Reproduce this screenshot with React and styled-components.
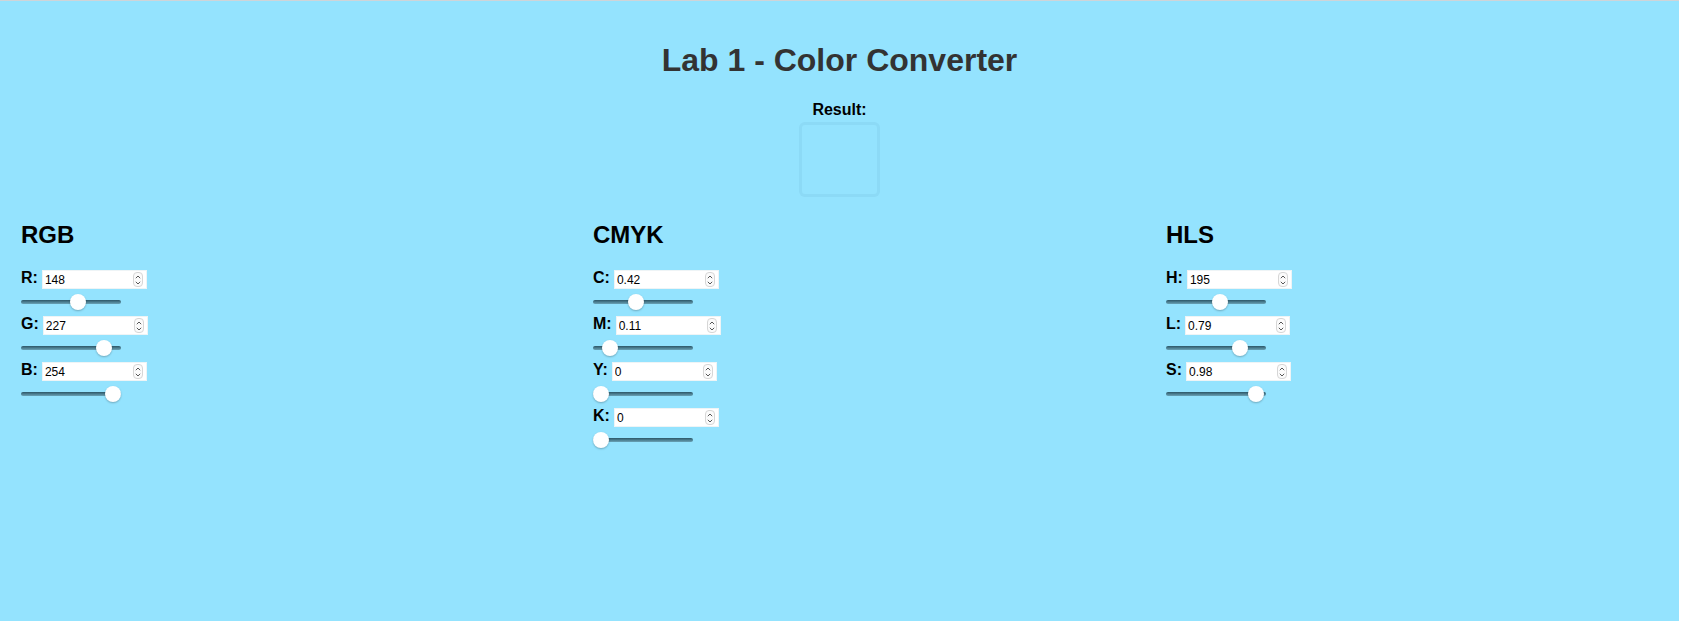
import { useState } from 'react'
import styled, { createGlobalStyle } from 'styled-components'

const GlobalStyle = createGlobalStyle`
  html, body {
    margin: 0;
    padding: 0;
    background: #ffffff;
  }

  body {
    font-family: "Liberation Sans", Arial, Helvetica, sans-serif;
  }
`

const Page = styled.main`
  width: calc(100% - 2px);
  min-height: 100vh;
  box-sizing: border-box;
  border-top: 1px solid #cfd4d8;
  background: ${({ $color }) => $color};
  overflow: hidden;
`

const Title = styled.h1`
  margin: 41px 0 0;
  font-size: 32px;
  line-height: 37px;
  font-weight: 700;
  color: #333333;
  text-align: center;
`

const Result = styled.section`
  display: flex;
  flex-direction: column;
  align-items: center;
  gap: 3px;
  margin-top: 22px;
`

const ResultLabel = styled.span`
  font-size: 16px;
  line-height: 18px;
  font-weight: 700;
  color: #000000;
`

const Swatch = styled.div`
  width: 81px;
  height: 75px;
  box-sizing: border-box;
  border: 3px solid rgba(0, 60, 90, 0.05);
  border-radius: 6px;
  background: ${({ $color }) => $color};
`

const Columns = styled.div`
  display: grid;
  grid-template-columns: 572px 573px auto;
  margin-top: 24px;
  padding-left: 21px;
`

const Model = styled.section`
  display: flex;
  flex-direction: column;
`

const ModelTitle = styled.h2`
  margin: 0 0 21px;
  font-size: 24px;
  line-height: 28px;
  font-weight: 700;
  color: #000000;
`

const Row = styled.div`
  display: flex;
  flex-direction: column;
  align-items: flex-start;
  margin-bottom: 6px;
`

const FieldLine = styled.label`
  display: flex;
  align-items: flex-start;
  gap: 4px;
  height: 19px;
`

const Letter = styled.span`
  font-size: 16px;
  line-height: 16px;
  font-weight: 700;
  color: #000000;
`

const Field = styled.div`
  display: flex;
  align-items: center;
  width: 105px;
  height: 19px;
  box-sizing: border-box;
  background: #ffffff;
  border: 1px solid #eef4f6;
`

const NumberInput = styled.input`
  flex: 1;
  min-width: 0;
  height: 100%;
  padding: 0 0 0 2px;
  border: none;
  outline: none;
  background: transparent;
  font-family: "Liberation Sans", Arial, Helvetica, sans-serif;
  font-size: 12px;
  color: #000000;
  -moz-appearance: textfield;

  &::-webkit-inner-spin-button,
  &::-webkit-outer-spin-button {
    -webkit-appearance: none;
    margin: 0;
  }
`

const Spinner = styled.span`
  display: flex;
  flex-direction: column;
  align-items: center;
  justify-content: center;
  gap: 2px;
  width: 10px;
  height: 15px;
  margin-right: 3px;
  box-sizing: border-box;
  border: 1px solid #d6d6d6;
  border-radius: 4px;
  background: #fbfbfb;
  cursor: default;
`

const SpinArrow = styled.span`
  display: flex;
  width: 6px;
  height: 4px;
  line-height: 0;

  svg {
    display: block;
  }
`

const Range = styled.input`
  -webkit-appearance: none;
  appearance: none;
  width: 100px;
  height: 16px;
  margin: 5px 0 0;
  padding: 0;
  background: transparent;

  &::-webkit-slider-runnable-track {
    height: 4px;
    border-radius: 2px;
    background: linear-gradient(#2c5667, #6aa3b7);
  }

  &::-webkit-slider-thumb {
    -webkit-appearance: none;
    width: 16px;
    height: 16px;
    margin-top: -6px;
    border-radius: 50%;
    background: #ffffff;
    box-shadow: 0 1px 2px rgba(0, 0, 0, 0.25);
  }
`

function Chevron({ up }) {
  return (
    <svg width="6" height="4" viewBox="0 0 6 4">
      <path
        d={up ? 'M0.8 3.2 L3 1 L5.2 3.2' : 'M0.8 0.8 L3 3 L5.2 0.8'}
        fill="none"
        stroke="#444"
        strokeWidth="0.9"
      />
    </svg>
  )
}

const round2 = (n) => Number(n.toFixed(2))

function rgbToCmyk([r, g, b]) {
  const rr = r / 255
  const gg = g / 255
  const bb = b / 255
  const k = 1 - Math.max(rr, gg, bb)
  if (k >= 1) return [0, 0, 0, 1]
  return [
    (1 - rr - k) / (1 - k),
    (1 - gg - k) / (1 - k),
    (1 - bb - k) / (1 - k),
    k,
  ]
}

function cmykToRgb([c, m, y, k]) {
  return [
    Math.round(255 * (1 - c) * (1 - k)),
    Math.round(255 * (1 - m) * (1 - k)),
    Math.round(255 * (1 - y) * (1 - k)),
  ]
}

function rgbToHls([r, g, b]) {
  const rr = r / 255
  const gg = g / 255
  const bb = b / 255
  const max = Math.max(rr, gg, bb)
  const min = Math.min(rr, gg, bb)
  const l = (max + min) / 2
  const d = max - min
  if (d === 0) return [0, l, 0]
  const s = l > 0.5 ? d / (2 - max - min) : d / (max + min)
  let h
  if (max === rr) h = (gg - bb) / d + (gg < bb ? 6 : 0)
  else if (max === gg) h = (bb - rr) / d + 2
  else h = (rr - gg) / d + 4
  return [h * 60, l, s]
}

function hlsToRgb([h, l, s]) {
  const c = (1 - Math.abs(2 * l - 1)) * s
  const x = c * (1 - Math.abs(((h / 60) % 2) - 1))
  const m = l - c / 2
  let t
  if (h < 60) t = [c, x, 0]
  else if (h < 120) t = [x, c, 0]
  else if (h < 180) t = [0, c, x]
  else if (h < 240) t = [0, x, c]
  else if (h < 300) t = [x, 0, c]
  else t = [c, 0, x]
  return t.map((v) => Math.round((v + m) * 255))
}

function Channel({ letter, value, max, step, onChange }) {
  const bump = (dir) => onChange(Math.min(max, Math.max(0, round2(value + dir * step))))

  return (
    <Row>
      <FieldLine>
        <Letter>{letter}:</Letter>
        <Field>
          <NumberInput
            type="number"
            min={0}
            max={max}
            step={step}
            value={value}
            onChange={(e) => onChange(Math.min(max, Math.max(0, Number(e.target.value))))}
          />
          <Spinner>
            <SpinArrow onClick={() => bump(1)}><Chevron up /></SpinArrow>
            <SpinArrow onClick={() => bump(-1)}><Chevron /></SpinArrow>
          </Spinner>
        </Field>
      </FieldLine>
      <Range
        type="range"
        min={0}
        max={max}
        step={step}
        value={value}
        onChange={(e) => onChange(Number(e.target.value))}
      />
    </Row>
  )
}

function ColorModel({ title, letters, values, max, step, onChange }) {
  return (
    <Model>
      <ModelTitle>{title}</ModelTitle>
      {letters.map((letter, i) => (
        <Channel
          key={letter}
          letter={letter}
          value={values[i]}
          max={max[i]}
          step={step[i]}
          onChange={(v) => onChange(values.map((old, j) => (j === i ? v : old)))}
        />
      ))}
    </Model>
  )
}

export default function App() {
  const [rgb, setRgb] = useState([148, 227, 254])

  const cmyk = rgbToCmyk(rgb).map(round2)
  const hls = rgbToHls(rgb)
  const hlsShown = [Math.round(hls[0]), round2(hls[1]), round2(hls[2])]
  const color = `rgb(${rgb.join(', ')})`

  return (
    <>
      <GlobalStyle />
      <Page $color="#94e3fe">
        <Title>Lab 1 - Color Converter</Title>

        <Result>
          <ResultLabel>Result:</ResultLabel>
          <Swatch $color={color} />
        </Result>

        <Columns>
          <ColorModel
            title="RGB"
            letters={['R', 'G', 'B']}
            values={rgb}
            max={[255, 255, 255]}
            step={[1, 1, 1]}
            onChange={setRgb}
          />
          <ColorModel
            title="CMYK"
            letters={['C', 'M', 'Y', 'K']}
            values={cmyk}
            max={[1, 1, 1, 1]}
            step={[0.01, 0.01, 0.01, 0.01]}
            onChange={(next) => setRgb(cmykToRgb(next))}
          />
          <ColorModel
            title="HLS"
            letters={['H', 'L', 'S']}
            values={hlsShown}
            max={[360, 1, 1]}
            step={[1, 0.01, 0.01]}
            onChange={(next) => setRgb(hlsToRgb(next))}
          />
        </Columns>
      </Page>
    </>
  )
}
